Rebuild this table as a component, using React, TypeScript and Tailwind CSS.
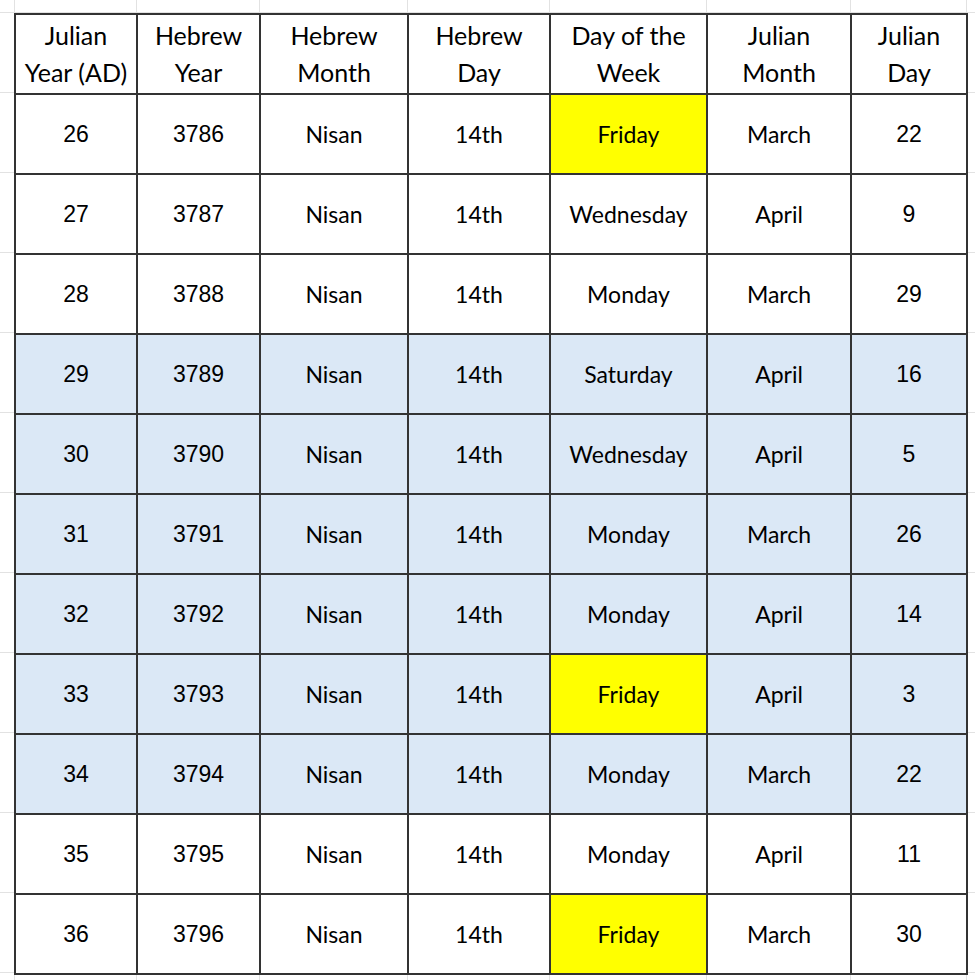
import React from "react";

type Row = {
  y: string;
  hy: string;
  dow: string;
  jm: string;
  jd: string;
  blue?: boolean;
};

const rows: Row[] = [
  { y: "26", hy: "3786", dow: "Friday", jm: "March", jd: "22" },
  { y: "27", hy: "3787", dow: "Wednesday", jm: "April", jd: "9" },
  { y: "28", hy: "3788", dow: "Monday", jm: "March", jd: "29" },
  { y: "29", hy: "3789", dow: "Saturday", jm: "April", jd: "16", blue: true },
  { y: "30", hy: "3790", dow: "Wednesday", jm: "April", jd: "5", blue: true },
  { y: "31", hy: "3791", dow: "Monday", jm: "March", jd: "26", blue: true },
  { y: "32", hy: "3792", dow: "Monday", jm: "April", jd: "14", blue: true },
  { y: "33", hy: "3793", dow: "Friday", jm: "April", jd: "3", blue: true },
  { y: "34", hy: "3794", dow: "Monday", jm: "March", jd: "22", blue: true },
  { y: "35", hy: "3795", dow: "Monday", jm: "April", jd: "11" },
  { y: "36", hy: "3796", dow: "Friday", jm: "March", jd: "30" },
];

const headers = [
  ["Julian", "Year (AD)"],
  ["Hebrew", "Year"],
  ["Hebrew", "Month"],
  ["Hebrew", "Day"],
  ["Day of the", "Week"],
  ["Julian", "Month"],
  ["Julian", "Day"],
];

const widths = ["w-[122px]", "w-[123px]", "w-[148px]", "w-[142px]", "w-[157px]", "w-[144px]", "w-[116px]"];

const num = "font-['Liberation_Sans',Arial,sans-serif] text-[23px]";
const word = "font-['Lato','Noto_Sans',sans-serif] text-[23px]";

function Strip() {
  return (
    <div className="flex h-[13px]">
      <div className="w-[15px] border-r border-[#e2e2e2]" />
      <div className="w-[122px] border-r border-[#e2e2e2]" />
      <div className="w-[123px] border-r border-[#e2e2e2]" />
      <div className="w-[148px] border-r border-[#e2e2e2]" />
      <div className="w-[142px] border-r border-[#e2e2e2]" />
      <div className="w-[157px] border-r border-[#e2e2e2]" />
      <div className="w-[144px] border-r border-[#e2e2e2]" />
      <div className="w-[116px] border-r border-[#e2e2e2]" />
    </div>
  );
}

export default function App() {
  return (
    <div className="w-[975px] h-[980px] overflow-hidden bg-white bg-[repeating-linear-gradient(to_bottom,#e2e2e2_0px,#e2e2e2_1px,transparent_1px,transparent_80px)] bg-[position:0_12px] text-black">
      <Strip />
      <div className="pl-[14px]">
        <table className="table-fixed border-collapse bg-white">
          <thead>
            <tr className="h-[80px]">
              {headers.map((h, i) => (
                <th
                  key={i}
                  className={`${widths[i]} border-2 border-[#333] p-0 text-center align-middle font-normal font-['Lato','Noto_Sans',sans-serif] text-[25px] leading-[37px]`}
                >
                  <div>{h[0]}</div>
                  <div>{h[1]}</div>
                </th>
              ))}
            </tr>
          </thead>
          <tbody>
            {rows.map((r) => {
              const bg = r.blue ? "bg-[#dbe8f6]" : "bg-white";
              const cell = `border-2 border-[#333] p-0 text-center align-middle ${bg}`;
              return (
                <tr key={r.y} className="h-[80px]">
                  <td className={`${cell} ${num}`}>{r.y}</td>
                  <td className={`${cell} ${num}`}>{r.hy}</td>
                  <td className={`${cell} ${word}`}>Nisan</td>
                  <td className={`${cell} ${word}`}>14th</td>
                  <td
                    className={`border-2 border-[#333] p-0 text-center align-middle ${word} ${
                      r.dow === "Friday" ? "bg-[#ffff00]" : bg
                    }`}
                  >
                    {r.dow}
                  </td>
                  <td className={`${cell} ${word}`}>{r.jm}</td>
                  <td className={`${cell} ${num}`}>{r.jd}</td>
                </tr>
              );
            })}
          </tbody>
        </table>
      </div>
      <Strip />
    </div>
  );
}
